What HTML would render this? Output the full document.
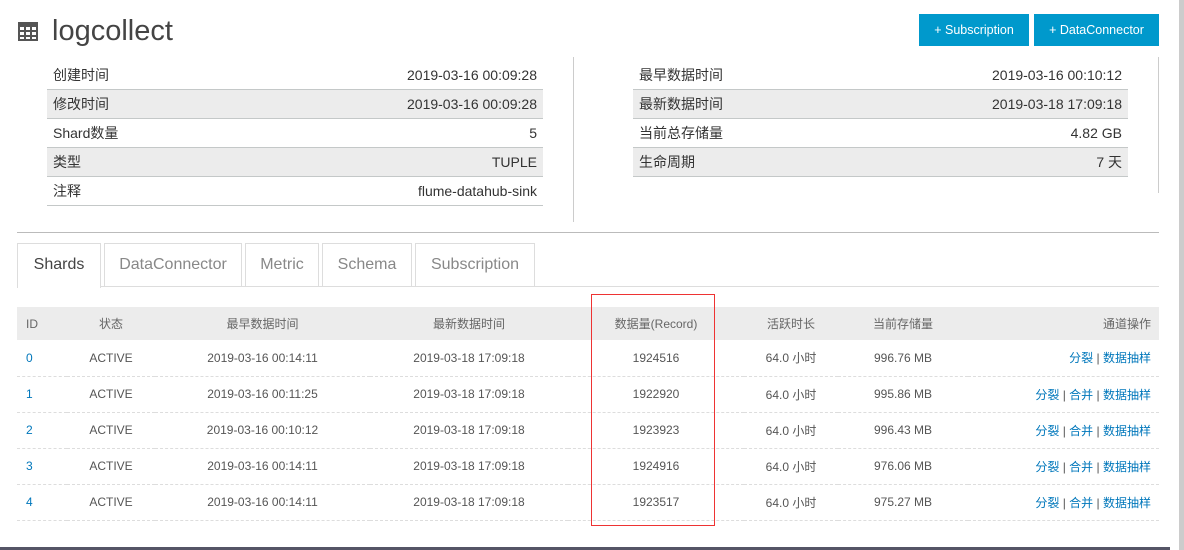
<!DOCTYPE html>
<html><head><meta charset="utf-8"><style>
*{margin:0;padding:0;box-sizing:border-box}
body{width:1184px;height:550px;overflow:hidden;background:#fff;font-family:"Liberation Sans","Noto Sans CJK SC",sans-serif;color:#333;position:relative}
.abs{position:absolute}
h1{position:absolute;left:52px;top:15px;font-size:29px;font-weight:normal;color:#444}
.btn{position:absolute;top:14px;height:32px;background:#0099cc;color:#fff;font-size:12.5px;line-height:32px;text-align:center}
.kv{position:absolute;width:496px}
.kv div{height:29px;border-bottom:1px solid #c4c8c8;display:flex;justify-content:space-between;align-items:center;padding:0 6px;font-size:14px;color:#333}
.kv div.g{background:#ececec}
.tab{position:absolute;top:243px;height:44px;border:1px solid #ddd;border-bottom:none;font-size:16px;color:#888;line-height:42px;text-align:center}
table{position:absolute;left:17px;top:307px;width:1142px;border-collapse:collapse;font-size:12px;color:#555}
th{height:33px;background:#ececec;font-weight:normal;color:#666}
td{height:36px;border-bottom:1px dashed #ddd}
.c{text-align:center}.r{text-align:right;padding-right:8px}.l{padding-left:9px;text-align:left}
a{color:#0077bb;text-decoration:none}
</style></head><body>
<svg class="abs" style="left:18px;top:22px" width="20" height="19" viewBox="0 0 20 19"><rect width="20" height="19" fill="#555"/><g fill="#fff"><rect x="2" y="5" width="4" height="3"/><rect x="8" y="5" width="4" height="3"/><rect x="14" y="5" width="4" height="3"/><rect x="2" y="10" width="4" height="3"/><rect x="8" y="10" width="4" height="3"/><rect x="14" y="10" width="4" height="3"/><rect x="2" y="15" width="4" height="2"/><rect x="8" y="15" width="4" height="2"/><rect x="14" y="15" width="4" height="2"/></g></svg>
<h1>logcollect</h1>
<div class="btn" style="left:919px;width:110px">+ Subscription</div>
<div class="btn" style="left:1034px;width:125px">+ DataConnector</div>
<div class="kv" style="left:47px;top:61px"><div><span>创建时间</span><span>2019-03-16 00:09:28</span></div><div class="g"><span>修改时间</span><span>2019-03-16 00:09:28</span></div><div><span>Shard数量</span><span>5</span></div><div class="g"><span>类型</span><span>TUPLE</span></div><div><span>注释</span><span>flume-datahub-sink</span></div></div>
<div class="abs" style="left:573px;top:57px;width:1px;height:165px;background:#ccc"></div>
<div class="kv" style="left:633px;top:61px;width:495px"><div><span>最早数据时间</span><span>2019-03-16 00:10:12</span></div><div class="g"><span>最新数据时间</span><span>2019-03-18 17:09:18</span></div><div><span>当前总存储量</span><span>4.82 GB</span></div><div class="g"><span>生命周期</span><span>7 天</span></div></div>
<div class="abs" style="left:1158px;top:57px;width:1px;height:136px;background:#ccc"></div>
<div class="abs" style="left:17px;top:232px;width:1142px;height:1px;background:#bbb"></div>
<div class="abs" style="left:17px;top:286px;width:1142px;height:1px;background:#ddd"></div>
<div class="tab" style="left:17px;width:84px;color:#444;background:#fff;height:45px">Shards</div>
<div class="tab" style="left:104px;width:138px">DataConnector</div>
<div class="tab" style="left:245px;width:74px">Metric</div>
<div class="tab" style="left:322px;width:90px">Schema</div>
<div class="tab" style="left:415px;width:120px">Subscription</div>
<table>
<tr><th class="l" style="width:50px">ID</th><th style="width:88px">状态</th><th style="width:215px">最早数据时间</th><th style="width:198px">最新数据时间</th><th style="width:176px">数据量(Record)</th><th style="width:94px">活跃时长</th><th style="width:130px">当前存储量</th><th class="r">通道操作</th></tr>
<tr><td class="l"><a>0</a></td><td class="c">ACTIVE</td><td class="c">2019-03-16 00:14:11</td><td class="c">2019-03-18 17:09:18</td><td class="c">1924516</td><td class="c">64.0 小时</td><td class="c">996.76 MB</td><td class="r"><a>分裂</a> | <a>数据抽样</a></td></tr>
<tr><td class="l"><a>1</a></td><td class="c">ACTIVE</td><td class="c">2019-03-16 00:11:25</td><td class="c">2019-03-18 17:09:18</td><td class="c">1922920</td><td class="c">64.0 小时</td><td class="c">995.86 MB</td><td class="r"><a>分裂</a> | <a>合并</a> | <a>数据抽样</a></td></tr>
<tr><td class="l"><a>2</a></td><td class="c">ACTIVE</td><td class="c">2019-03-16 00:10:12</td><td class="c">2019-03-18 17:09:18</td><td class="c">1923923</td><td class="c">64.0 小时</td><td class="c">996.43 MB</td><td class="r"><a>分裂</a> | <a>合并</a> | <a>数据抽样</a></td></tr>
<tr><td class="l"><a>3</a></td><td class="c">ACTIVE</td><td class="c">2019-03-16 00:14:11</td><td class="c">2019-03-18 17:09:18</td><td class="c">1924916</td><td class="c">64.0 小时</td><td class="c">976.06 MB</td><td class="r"><a>分裂</a> | <a>合并</a> | <a>数据抽样</a></td></tr>
<tr><td class="l"><a>4</a></td><td class="c">ACTIVE</td><td class="c">2019-03-16 00:14:11</td><td class="c">2019-03-18 17:09:18</td><td class="c">1923517</td><td class="c">64.0 小时</td><td class="c">975.27 MB</td><td class="r"><a>分裂</a> | <a>合并</a> | <a>数据抽样</a></td></tr>
</table>
<div class="abs" style="left:591px;top:294px;width:124px;height:232px;border:1px solid #e33"></div>
<div class="abs" style="left:1179px;top:0;width:5px;height:550px;background:#ccc"></div>
<div class="abs" style="left:0;top:547px;width:1170px;height:3px;background:#556"></div>
</body></html>
